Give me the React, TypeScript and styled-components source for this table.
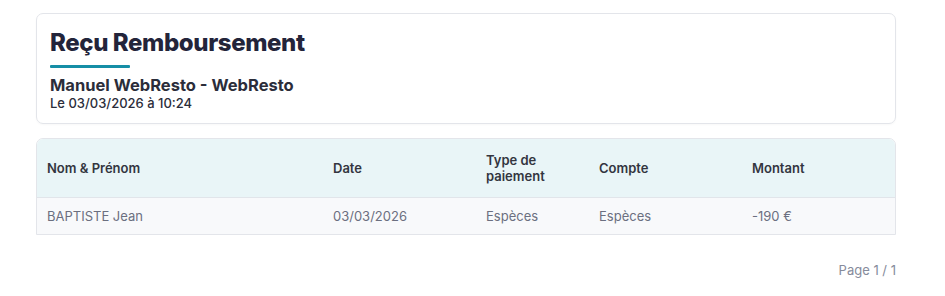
import React from 'react';
import styled, { createGlobalStyle } from 'styled-components';

const GlobalStyle = createGlobalStyle`
  html, body {
    margin: 0;
    padding: 0;
    background: #ffffff;
  }
  body {
    font-family: Inter, "Noto Sans", sans-serif;
    color: #2b2d3a;
  }
`;

const Page = styled.div`
  width: 860px;
  padding: 13px 0 0 36px;
`;

const HeaderCard = styled.div`
  border: 1px solid #e3e5ea;
  border-radius: 7px;
  padding: 14px 13px 13px;
  height: 82px;
  box-shadow: 0 1px 2px rgba(0, 0, 0, 0.03);
`;

const Title = styled.h1`
  margin: 0;
  font-size: 24px;
  font-weight: 800;
  line-height: 30px;
  color: #23243a;
  letter-spacing: -0.4px;
`;

const Accent = styled.div`
  width: 80px;
  height: 3px;
  margin: 7px 0 8px;
  background: #168ea6;
  border-radius: 1px;
`;

const Subtitle = styled.div`
  font-size: 16.5px;
  font-weight: 700;
  line-height: 19px;
  color: #2b2d3a;
`;

const Stamp = styled.div`
  font-size: 13px;
  font-weight: 500;
  line-height: 16px;
  color: #2b2d3a;
`;

const TableWrap = styled.div`
  margin-top: 14px;
  border: 1px solid #e3e5ea;
  border-radius: 7px 7px 0 0;
  overflow: hidden;
`;

const Table = styled.table`
  width: 100%;
  border-collapse: collapse;
  table-layout: fixed;
  font-size: 13px;
`;

const Th = styled.th<{ $w: number }>`
  box-sizing: border-box;
  width: ${(p) => p.$w}px;
  text-align: left;
  font-weight: 600;
  color: #33353f;
  background: #e9f5f7;
  padding: 0 10px;
  height: 58px;
  line-height: 16px;
  border-bottom: 1px solid #e1e5ea;
`;

const Td = styled.td`
  padding: 0 10px;
  height: 36px;
  color: #6b6f80;
  background: #f8f9fb;
`;

const Footer = styled.div`
  text-align: right;
  font-size: 13px;
  color: #868b9b;
  margin-top: 27px;
`;

const columns = [
  { label: 'Nom & Prénom', w: 286 },
  { label: 'Date', w: 153 },
  { label: 'Type de paiement', w: 113 },
  { label: 'Compte', w: 153 },
  { label: 'Montant', w: 153 },
];

const rows = [['BAPTISTE Jean', '03/03/2026', 'Espèces', 'Espèces', '-190 €']];

const App: React.FC = () => {
  return (
    <>
      <GlobalStyle />
      <Page>
        <HeaderCard>
          <Title>Reçu Remboursement</Title>
          <Accent />
          <Subtitle>Manuel WebResto - WebResto</Subtitle>
          <Stamp>Le 03/03/2026 à 10:24</Stamp>
        </HeaderCard>

        <TableWrap>
          <Table>
            <thead>
              <tr>
                {columns.map((c) => (
                  <Th key={c.label} $w={c.w}>
                    {c.label === 'Type de paiement' ? (
                      <>
                        Type de
                        <br />
                        paiement
                      </>
                    ) : (
                      c.label
                    )}
                  </Th>
                ))}
              </tr>
            </thead>
            <tbody>
              {rows.map((r, i) => (
                <tr key={i}>
                  {r.map((cell, j) => (
                    <Td key={j}>{cell}</Td>
                  ))}
                </tr>
              ))}
            </tbody>
          </Table>
        </TableWrap>

        <Footer>Page 1 / 1</Footer>
      </Page>
    </>
  );
};

export default App;
